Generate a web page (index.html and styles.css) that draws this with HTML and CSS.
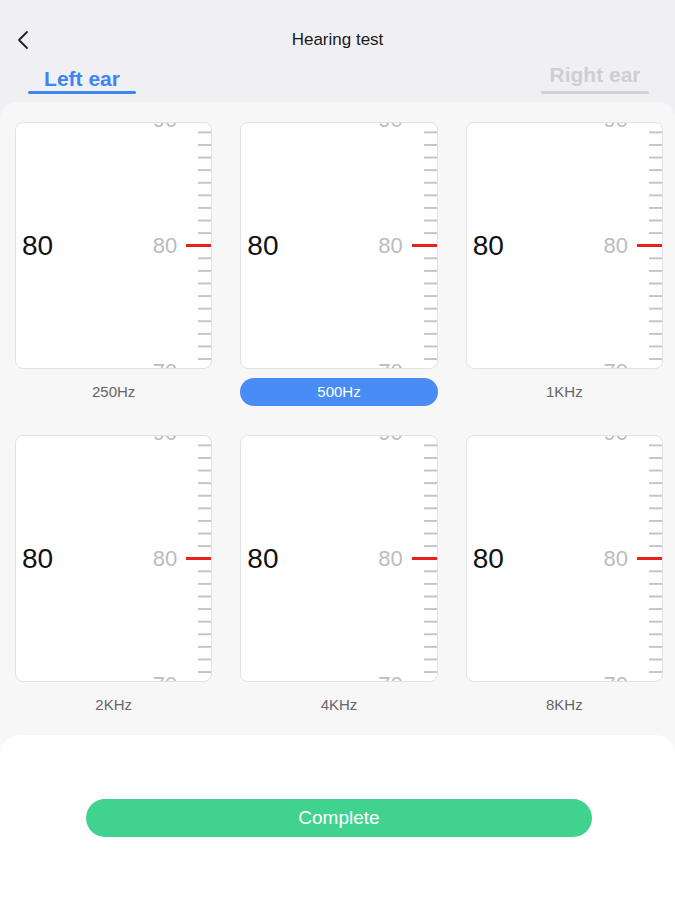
FILE: index.html
```html
<!DOCTYPE HTML>
<html>
	<head>
		<meta http-equiv="Content-Type" content="text/html; charset=UTF-8" />
		<title>Hearing test</title>
		<link rel="stylesheet" href="styles.css">
	</head>
	<body>
		<div class="topbar">
			<div class="back">
				<svg width="12" height="20" viewBox="0 0 12 20"><polyline points="10,2 2,10 10,18" fill="none" stroke="#222" stroke-width="1.8" stroke-linecap="round" stroke-linejoin="round"/></svg>
			</div>
			<div class="title">Hearing test</div>
			<div></div>
		</div>
		<div class="tabs">
			<div class="tab tab--active"><span class="tab_label">Left ear</span><i class="tab_line"></i></div>
			<div class="tab tab--off"><span class="tab_label">Right ear</span><i class="tab_line"></i></div>
		</div>
		<div class="sheet">
			<div class="grid">
				<div class="cell">
					<div class="card">
						<div class="value">80</div>
						<div class="scale">
							<div class="marks"><span>90</span><span>80</span><span>70</span></div>
							<div class="ticks"></div>
							<div class="pointer"></div>
						</div>
					</div>
					<div class="freq">250Hz</div>
				</div>
				<div class="cell">
					<div class="card">
						<div class="value">80</div>
						<div class="scale">
							<div class="marks"><span>90</span><span>80</span><span>70</span></div>
							<div class="ticks"></div>
							<div class="pointer"></div>
						</div>
					</div>
					<div class="freq freq--active">500Hz</div>
				</div>
				<div class="cell">
					<div class="card">
						<div class="value">80</div>
						<div class="scale">
							<div class="marks"><span>90</span><span>80</span><span>70</span></div>
							<div class="ticks"></div>
							<div class="pointer"></div>
						</div>
					</div>
					<div class="freq">1KHz</div>
				</div>
				<div class="cell">
					<div class="card">
						<div class="value">80</div>
						<div class="scale">
							<div class="marks"><span>90</span><span>80</span><span>70</span></div>
							<div class="ticks"></div>
							<div class="pointer"></div>
						</div>
					</div>
					<div class="freq">2KHz</div>
				</div>
				<div class="cell">
					<div class="card">
						<div class="value">80</div>
						<div class="scale">
							<div class="marks"><span>90</span><span>80</span><span>70</span></div>
							<div class="ticks"></div>
							<div class="pointer"></div>
						</div>
					</div>
					<div class="freq">4KHz</div>
				</div>
				<div class="cell">
					<div class="card">
						<div class="value">80</div>
						<div class="scale">
							<div class="marks"><span>90</span><span>80</span><span>70</span></div>
							<div class="ticks"></div>
							<div class="pointer"></div>
						</div>
					</div>
					<div class="freq">8KHz</div>
				</div>
			</div>
			<div class="footer">
				<div class="complete">Complete</div>
			</div>
		</div>
	</body>
</html>
```

FILE: styles.css
```css
html, body {
	height: 100%;
}
body {
	margin: 0;
	background: #efeff4;
	font-family: "Liberation Sans", Arial, sans-serif;
	color: #222;
	display: flex;
	flex-direction: column;
}
.topbar {
	display: grid;
	grid-template-columns: 60px 1fr 60px;
	align-items: center;
	padding-top: 28px;
	height: 24px;
}
.back {
	padding-left: 17px;
	display: flex;
	align-items: center;
}
.title {
	text-align: center;
	font-size: 17px;
	line-height: 24px;
	color: #1a1a1a;
}
.tabs {
	display: flex;
	justify-content: space-between;
	align-items: flex-end;
	height: 42px;
	padding: 0 26px 0 28px;
}
.tab {
	width: 108px;
	display: flex;
	flex-direction: column;
	align-items: center;
}
.tab_label {
	font-size: 21px;
	font-weight: bold;
	line-height: 22px;
}
.tab_line {
	display: block;
	width: 100%;
	height: 3px;
	border-radius: 2px;
}
.tab--active .tab_label {
	color: #3c85f2;
	margin-bottom: 1px;
}
.tab--active .tab_line {
	background: #3c85f2;
}
.tab--off .tab_label {
	color: #cfcfd2;
	margin-bottom: 5px;
}
.tab--off .tab_line {
	background: #d2d2d5;
}
.sheet {
	flex-grow: 1;
	margin-top: 8px;
	background: #f7f7f7;
	border-radius: 16px 16px 0 0;
	display: flex;
	flex-direction: column;
}
.grid {
	display: grid;
	grid-template-columns: repeat(3, 1fr);
	column-gap: 28px;
	row-gap: 29px;
	padding: 20px 12px 16px 15px;
}
.card {
	box-sizing: border-box;
	height: 247px;
	background: #fff;
	border: 1px solid #e2e2e2;
	border-radius: 8px;
	overflow: hidden;
	display: flex;
	align-items: center;
}
.value {
	padding-left: 6px;
	font-size: 28px;
	color: #111;
}
.scale {
	margin-left: auto;
	align-self: stretch;
	display: flex;
	position: relative;
}
.marks {
	display: flex;
	flex-direction: column;
	justify-content: center;
	gap: 100px;
	margin-right: 21px;
	font-size: 22px;
	line-height: 26px;
	color: #bcbcbc;
	text-align: right;
}
.ticks {
	width: 13px;
	background: linear-gradient(#c4c4c4 2px, transparent 2px) 0 8.4px / 100% 12.6px repeat-y;
}
.pointer {
	position: absolute;
	right: 0;
	top: calc(50% - 1.5px);
	width: 25px;
	height: 3px;
	background: #e8221b;
}
.freq {
	margin-top: 9px;
	height: 28px;
	line-height: 28px;
	border-radius: 14px;
	text-align: center;
	font-size: 15px;
	color: #666;
}
.freq--active {
	background: #4a8cf5;
	color: #fff;
}
.footer {
	flex-grow: 1;
	background: #fff;
	border-radius: 20px 20px 0 0;
	padding-top: 64px;
}
.complete {
	width: 506px;
	height: 38px;
	margin-left: 86px;
	border-radius: 19px;
	background: #3fd38f;
	color: #fff;
	font-size: 19px;
	line-height: 38px;
	text-align: center;
}
```
